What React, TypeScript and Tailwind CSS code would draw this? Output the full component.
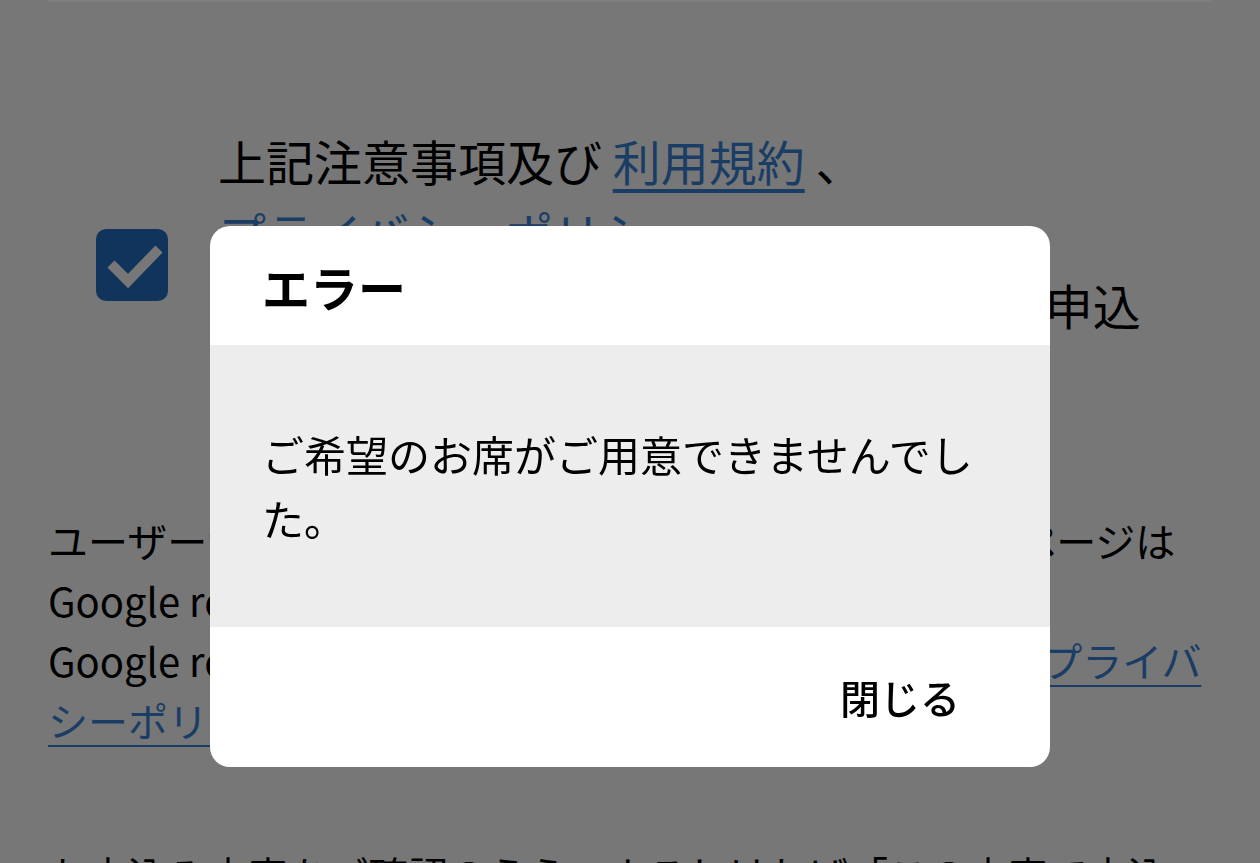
import React from "react";

const FONT = { fontFamily: '"Noto Sans CJK JP", "Noto Sans", sans-serif' };

function CheckBox() {
  return (
    <div className="mt-[105px] flex h-[72px] w-[72px] shrink-0 items-center justify-center rounded-[10px] bg-[#10345c]">
      <svg viewBox="0 0 72 72" className="h-[72px] w-[72px]">
        <polyline
          points="15,35 32,52 63,20"
          fill="none"
          stroke="#777777"
          strokeWidth="10"
        />
      </svg>
    </div>
  );
}

function ErrorDialog() {
  return (
    <div className="fixed inset-0 flex items-start justify-center pt-[226px]">
      <div className="w-[840px] overflow-hidden rounded-[20px] bg-white text-black">
        <div className="flex h-[119px] items-center px-[52px]">
          <h2 className="text-[48px] font-bold leading-[72px]">エラー</h2>
        </div>
        <div className="bg-[#ededed] px-[52px] py-[77px] text-[42px] leading-[64px]">
          ご希望のお席がご用意できませんでした。
        </div>
        <div className="flex h-[140px] items-center justify-end pr-[90px]">
          <button className="text-[40px] font-medium leading-[60px]">閉じる</button>
        </div>
      </div>
    </div>
  );
}

export default function App() {
  return (
    <div style={FONT} className="relative h-[863px] overflow-hidden bg-[#777777] text-black">
      <div className="px-12">
        <div className="h-[2px] bg-[#7f7f7f]" />

        <div className="mt-[122px] flex items-start gap-[50px] pl-12">
          <CheckBox />
          <p className="text-[48px] leading-[72px]">
            上記注意事項及び <a className="text-[#1a3d66] underline underline-offset-8">利用規約</a> 、
            <br />
            <a className="text-[#1a3d66] underline underline-offset-8">プライバシーポリシー</a>
            <br />
            に同意の上、 上記の内容でチケットを申込
            <br />
            みます。
          </p>
        </div>

        <p className="mt-[98px] text-[40px] leading-[60px]">
          ユーザーがロボットでないことを確認するため、 このページは
          <br />
          Google reCAPTCHAによって保護されています。
          <br />
          Google reCAPTCHAの<a className="text-[#1a3d66] underline underline-offset-8">利用規約</a>と当社が別途定める各種
          <a className="text-[#1a3d66] underline decoration-2 underline-offset-8">プライバシーポリシー</a>
          が適用されます。
        </p>

        <p className="mt-[94px] text-[40px] leading-[60px]">
          お申込み内容をご確認のうえ、よろしければ「この内容で申込む」ボタンを押してください。
        </p>
      </div>

      <ErrorDialog />
    </div>
  );
}
